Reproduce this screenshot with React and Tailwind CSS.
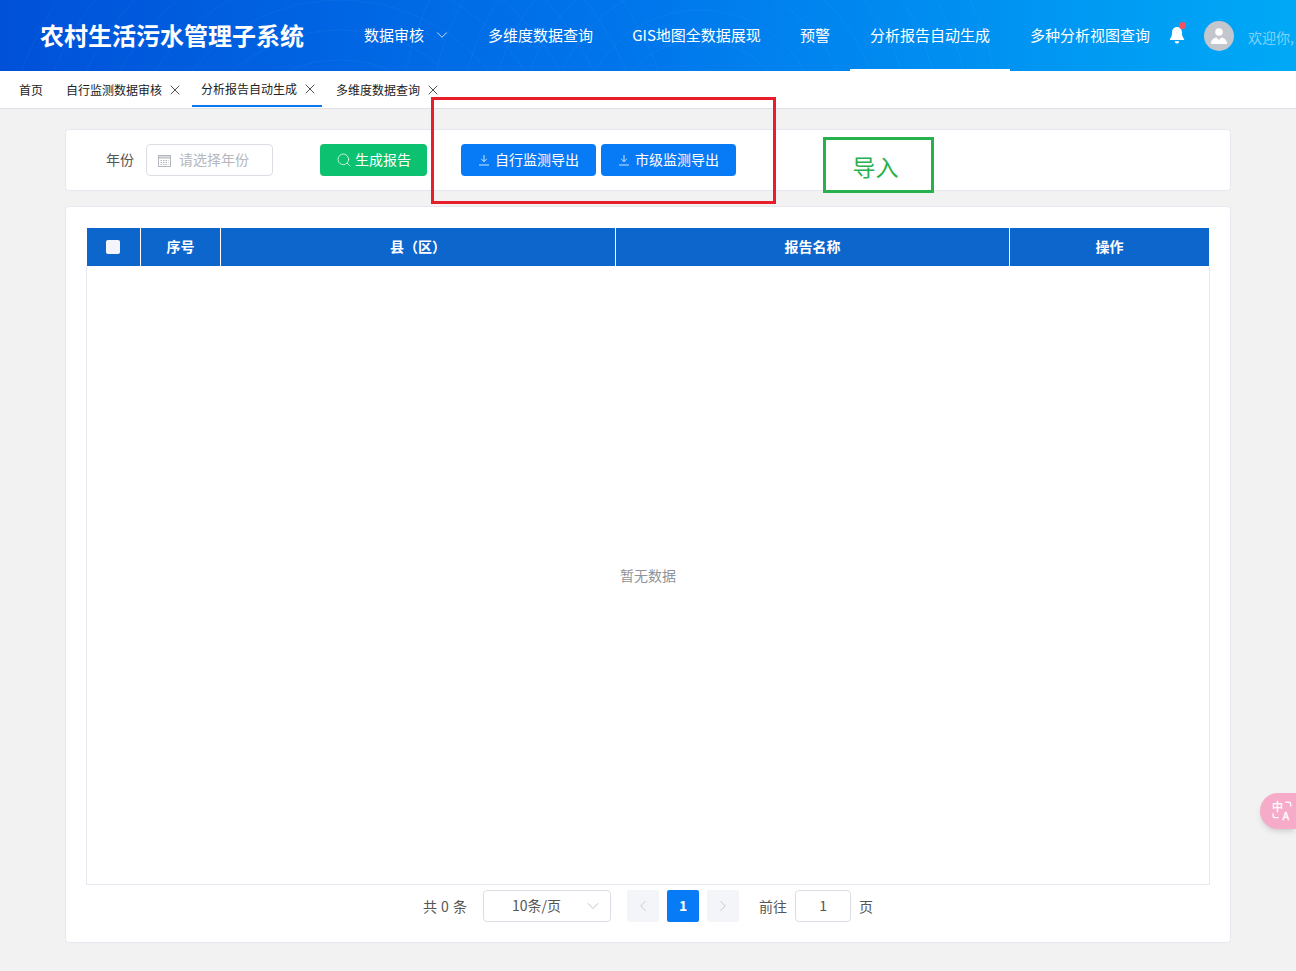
import { useState } from "react";
import { ChevronDown, ChevronLeft, ChevronRight, Search, X } from "lucide-react";

const navItems = [
  { label: "数据审核", arrow: true },
  { label: "多维度数据查询" },
  { label: "GIS地图全数据展现", fixed: true },
  { label: "预警" },
  { label: "分析报告自动生成", active: true },
  { label: "多种分析视图查询" },
];

const tabs = [
  { label: "首页" },
  { label: "自行监测数据审核", close: true },
  { label: "分析报告自动生成", close: true, active: true },
  { label: "多维度数据查询", close: true },
];

const arcs = [60, 90, 120, 150, 180, 210, 240, 270, 300];

function DownloadIcon() {
  return (
    <svg width="12" height="12" viewBox="0 0 12 12" fill="none" stroke="currentColor" strokeWidth="1" className="mt-[2px] shrink-0 opacity-80">
      <path d="M6 1v6.500M3.200 5 6 7.600 8.800 5M1 11h10" />
    </svg>
  );
}

function CalendarIcon() {
  return (
    <svg width="13" height="13" viewBox="0 0 13 13" fill="none" stroke="#b4b7bd" strokeWidth="1" className="mt-[2px] shrink-0">
      <rect x="0.500" y="1.500" width="12" height="11" />
      <path d="M0.500 3h12M0.500 4h12" />
      <path d="M2.500 6.500h8M2.500 8.500h8M2.500 10.500h8" strokeDasharray="1.500 1" />
    </svg>
  );
}

function HeaderWaves() {
  return (
    <svg className="absolute inset-0 h-full w-full" viewBox="0 0 1296 71" fill="none" stroke="#ffffff" strokeOpacity="0.04">
      {arcs.map((r) => (
        <circle key={r} cx="700" cy="130" r={r} />
      ))}
      {arcs.map((r) => (
        <circle key={r} cx="340" cy="190" r={r + 40} />
      ))}
    </svg>
  );
}

function Header() {
  return (
    <header className="relative flex h-[71px] shrink-0 items-center overflow-hidden bg-gradient-to-r from-[#0051d8] via-[#0077ec] to-[#00a9f6] text-white">
      <HeaderWaves />
      <div className="relative w-[344px] shrink-0 pb-[2px] pl-[40px] text-[24px] font-bold leading-none">农村生活污水管理子系统</div>
      <nav className="relative flex h-full shrink-0">
        {navItems.map((item) => (
          <div
            key={item.label}
            className={`flex h-full items-center whitespace-nowrap text-[15px] ${
              item.fixed ? "w-[167px] justify-center" : "px-[20px]"
            } ${item.active ? "border-b-[2px] border-white pt-[1px]" : "pb-[1px]"}`}
          >
            {item.label}
            {item.arrow && <ChevronDown strokeWidth={1.300} className="ml-[9px] mr-[-3px] h-[18px] w-[18px] opacity-80" />}
          </div>
        ))}
      </nav>
      <div className="relative ml-[-2px] mr-[16px] h-[24px] w-[20px] shrink-0">
        <svg width="16" height="20" viewBox="0 0 18 22" fill="#ffffff" className="ml-[1px] mt-[1px]">
          <path d="M9 2c-3.600 0-5.600 2.800-5.600 6.200 0 3.600-.8 5.600-2.400 7.200v1.200h16v-1.200c-1.600-1.600-2.400-3.600-2.400-7.200C14.600 4.800 12.600 2 9 2z" />
          <path d="M6.500 18h5a2.500 2.500 0 0 1-5 0z" />
        </svg>
        <span className="absolute right-[2px] top-[-2px] h-[7px] w-[7px] rounded-full bg-[#f0555f]" />
      </div>
      <div className="relative flex h-[30px] w-[30px] shrink-0 items-center justify-center overflow-hidden rounded-full bg-[#c3c6cd]">
        <svg width="20" height="20" viewBox="0 0 20 20" fill="#ffffff">
          <circle cx="10" cy="6" r="3.800" />
          <path d="M2 18c0-4 2.500-6 5.500-6.500L10 14l2.500-2.500c3 .5 5.500 2.500 5.500 6.500z" />
        </svg>
      </div>
      <div className="relative ml-[14px] shrink-0 whitespace-nowrap pt-[3px] text-[14px] text-white/50">欢迎你,</div>
    </header>
  );
}

function TabBar() {
  return (
    <div className="flex h-[38px] shrink-0 gap-[5px] border-b border-[#e0e1e8] bg-white pl-[10px]">
      {tabs.map((tab) => (
        <div
          key={tab.label}
          className={`flex h-[36px] items-center pl-[9px] text-[12px] text-[#222222] ${tab.close ? "pr-[4px]" : "pr-[9px]"} ${
            tab.active ? "border-b-[2px] border-[#0d78ec] pt-[2px]" : "pt-[1px]"
          }`}
        >
          {tab.label}
          {tab.close && <X strokeWidth={1.200} className="ml-[5px] h-[16px] w-[16px]" />}
        </div>
      ))}
    </div>
  );
}

function Filters() {
  return (
    <section className="flex h-[62px] items-center rounded border border-[#e6e7ef] bg-white pl-[40px]">
      <span className="w-[40px] pb-[2px] text-[14px] text-[#555555]">年份</span>
      <div className="flex h-[32px] w-[127px] items-center rounded border border-[#dcdee6] pb-[2px] pl-[11px] text-[14px] text-[#b4b7bd]">
        <CalendarIcon />
        <span className="ml-[8px]">请选择年份</span>
      </div>
      <button className="ml-[47px] flex h-[32px] w-[107px] items-center justify-center gap-[3px] rounded bg-[#0cc170] pb-[2px] text-[14px] text-white">
        <Search strokeWidth={1.100} className="mt-[2px] h-[16px] w-[16px]" />
        生成报告
      </button>
      <button className="ml-[34px] flex h-[32px] w-[135px] items-center gap-[5px] rounded bg-[#077bf6] pb-[2px] pl-[17px] text-[14px] text-white">
        <DownloadIcon />
        自行监测导出
      </button>
      <button className="ml-[5px] flex h-[32px] w-[135px] items-center gap-[5px] rounded bg-[#077bf6] pb-[2px] pl-[17px] text-[14px] text-white">
        <DownloadIcon />
        市级监测导出
      </button>
    </section>
  );
}

function ReportTable({ checked, onToggle }) {
  const cell = "flex items-center justify-center border-r border-white pb-[2px] text-[14px] font-bold text-white";
  return (
    <div>
      <div className="mx-[1px] grid h-[38px] grid-cols-[54px_80px_395px_394px_199px] bg-[#0d66cc]">
        <div className={`${cell} pr-[1px]`}>
          <input
            type="checkbox"
            checked={checked}
            onChange={onToggle}
            className="mt-[2px] h-[14px] w-[14px] appearance-none rounded-[2px] bg-[#f4f5fa]"
          />
        </div>
        <div className={cell}>序号</div>
        <div className={cell}>县（区）</div>
        <div className={cell}>报告名称</div>
        <div className={`${cell} border-r-0`}>操作</div>
      </div>
      <div className="flex h-[619px] items-center justify-center border border-t-0 border-[#e6e7ef] text-[14px] text-[#909399]">
        暂无数据
      </div>
    </div>
  );
}

function Pagination() {
  return (
    <div className="mt-[5px] flex h-[32px] items-center justify-center text-[14px] text-[#555555]">
      <span className="[word-spacing:1px]">共 0 条</span>
      <div className="relative ml-[16px] flex h-[32px] w-[128px] items-center rounded border border-[#dcdee6] pb-[1px] pl-[28px]">
        10条/页
        <ChevronDown strokeWidth={1} className="absolute right-[7px] top-[5px] h-[20px] w-[20px] text-[#b4b7bd]" />
      </div>
      <div className="ml-[16px] flex h-[32px] w-[32px] items-center justify-center rounded-[2px] bg-[#f4f5f9] text-[#c0c4cc]">
        <ChevronLeft strokeWidth={1.200} className="h-[18px] w-[18px]" />
      </div>
      <div className="ml-[8px] flex h-[32px] w-[32px] items-center justify-center rounded-[2px] bg-[#077bf6] pb-[1px] font-bold text-white">1</div>
      <div className="ml-[8px] flex h-[32px] w-[32px] items-center justify-center rounded-[2px] bg-[#f4f5f9] text-[#c0c4cc]">
        <ChevronRight strokeWidth={1.200} className="h-[18px] w-[18px]" />
      </div>
      <span className="ml-[20px]">前往</span>
      <div className="ml-[8px] flex h-[32px] w-[56px] items-center justify-center rounded border border-[#dcdee6] pb-[1px]">1</div>
      <span className="ml-[8px]">页</span>
    </div>
  );
}

export default function App() {
  const [checked, setChecked] = useState(false);

  return (
    <div
      className="relative flex h-[971px] w-[1296px] flex-col overflow-hidden bg-[#f2f2f2]"
      style={{ fontFamily: '"Noto Sans CJK SC", "Liberation Sans", sans-serif' }}
    >
      <Header />
      <TabBar />
      <main className="flex flex-col gap-[15px] px-[65px] pt-[20px]">
        <Filters />
        <section className="h-[737px] rounded border border-[#e6e7ef] bg-white px-[20px] pt-[21px]">
          <ReportTable checked={checked} onToggle={() => setChecked(!checked)} />
          <Pagination />
        </section>
      </main>

      {/* annotation boxes drawn over the screenshot */}
      <div className="absolute left-[431px] top-[97px] h-[107px] w-[345px] border-[3px] border-[#e81f2a]" />
      <div className="absolute left-[823px] top-[137px] flex h-[56px] w-[111px] items-center justify-center border-[3px] border-[#27b14e] pr-[6px] pt-[2px] text-[23px] text-[#27b14e]">
        导入
      </div>

      {/* translate widget */}
      <div className="absolute left-[1260px] top-[793px] flex h-[36px] w-[36px] items-center rounded-l-full bg-[#f6abc9] pl-[12px] shadow-md">
        <svg width="22" height="22" viewBox="0 0 20 20" fill="#ffffff" stroke="#ffffff" className="overflow-visible">
          <text x="0" y="10" fontSize="10" strokeWidth="0.300">中</text>
          <text x="9.500" y="18" fontSize="10" strokeWidth="0.300">A</text>
          <path d="M12 2h3a2 2 0 0 1 2 2v2M1 12v2a2 2 0 0 0 2 2h3" fill="none" strokeWidth="1.200" />
        </svg>
      </div>
    </div>
  );
}
